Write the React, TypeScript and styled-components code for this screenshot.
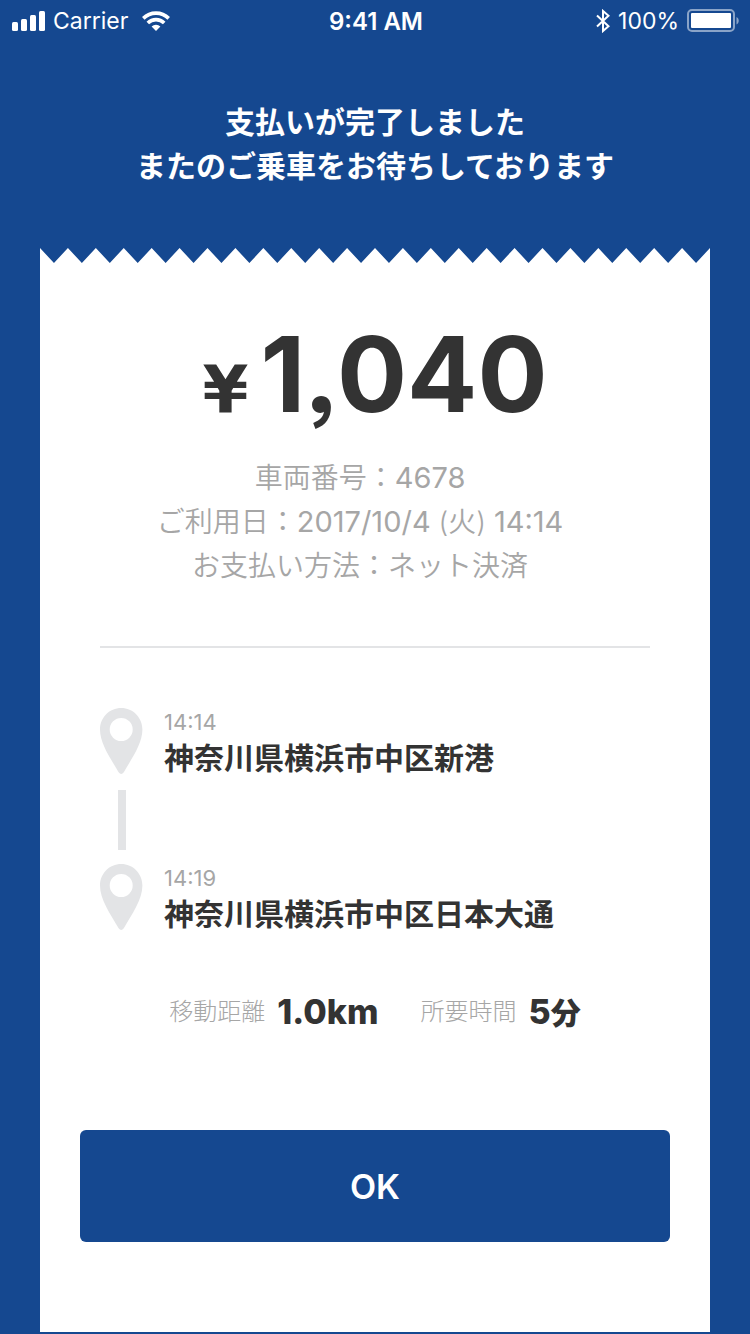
import React from "react";
import styled, { createGlobalStyle } from "styled-components";

const blue = "#154890";

const GlobalStyle = createGlobalStyle`
  * { box-sizing: border-box; }
  body {
    margin: 0;
    background: ${blue};
    color: #333;
    font-family: Inter, "Noto Sans CJK JP", sans-serif;
  }
  h1, p, ol, dl, dd { margin: 0; padding: 0; }
`;

const Screen = styled.div`
  display: flex;
  flex-direction: column;
  min-height: 100vh;
  padding-bottom: 2px;
`;

const StatusBar = styled.header`
  display: grid;
  grid-template-columns: 1fr auto 1fr;
  align-items: center;
  height: 42px;
  padding: 0 10px 0 12px;
  color: #fff;
  font-size: 23px;
`;

const StatusGroup = styled.div<{ $end?: boolean }>`
  display: flex;
  align-items: center;
  justify-content: ${(p) => (p.$end ? "flex-end" : "flex-start")};
  gap: 8px;
`;

const Carrier = styled.span`
  margin-right: 6px;
`;

const Clock = styled.time`
  font-size: 24px;
  font-weight: 600;
`;

const Heading = styled.h1`
  padding: 58px 0 60px;
  color: #fff;
  font-size: 30px;
  font-weight: 700;
  line-height: 44px;
  text-align: center;
`;

const Receipt = styled.main`
  display: flex;
  flex: 1;
  flex-direction: column;
  margin: 0 40px;
`;

const TornEdge = styled.svg`
  display: block;
  width: 100%;
  height: 16px;
`;

const Paper = styled.div`
  flex: 1;
  padding: 54px 40px 88px;
  background: #fff;
`;

const Price = styled.p`
  display: flex;
  align-items: baseline;
  justify-content: center;
  gap: 12px;
  font-size: 104px;
  font-feature-settings: "ss03";
  font-weight: 700;
  line-height: 112px;
`;

const Yen = styled.span`
  font-family: "DejaVu Sans", sans-serif;
  font-size: 66px;
  line-height: 66px;
`;

const Details = styled.dl`
  margin: 26px 30px 0 0;
  color: #a6a6a6;
  font-size: 28px;
  font-weight: 350;
  line-height: 44px;
  text-align: center;
`;

const DetailRow = styled.div`
  height: 44px;

  dt, dd { display: inline; }
`;

const Digits = styled.span`
  font-size: 29px;
  font-weight: 400;
`;

const Route = styled.ol`
  margin: 58px 20px 0;
  padding-top: 60px;
  border-top: 2px solid #e3e4e6;
  list-style: none;
`;

const Stop = styled.li`
  display: flex;
  gap: 20px;
`;

const Marker = styled.div`
  display: flex;
  flex-direction: column;
  align-items: center;
`;

const Pin = styled.svg`
  display: block;
  width: 44px;
  height: 66px;
`;

const Connector = styled.span`
  width: 8px;
  height: 60px;
  margin: 16px 0 14px;
  background: #e3e4e6;
`;

const StopTime = styled.time`
  display: block;
  color: #a6a6a6;
  font-size: 22px;
  line-height: 28px;
`;

const Place = styled.p`
  font-size: 30px;
  font-weight: 700;
  line-height: 44px;
`;

const Summary = styled.dl`
  display: flex;
  justify-content: center;
  gap: 42px;
  margin-top: 54px;
`;

const Stat = styled.div`
  display: flex;
  align-items: center;
  gap: 12px;
  height: 44px;
  line-height: 44px;

  dt { color: #a6a6a6; font-size: 24px; font-weight: 300; }
  dd { font-size: 34px; font-weight: 800; }
  small { font-size: 30px; line-height: 30px; }
`;

const OkButton = styled.button`
  display: block;
  width: 100%;
  height: 112px;
  margin-top: 96px;
  border: 0;
  border-radius: 6px;
  background: ${blue};
  color: #fff;
  font: 600 34px Inter, sans-serif;
`;

const SignalIcon = () => (
  <svg width="33" height="20" viewBox="0 0 33 20" fill="#fff" aria-hidden="true">
    <rect y="11" width="6" height="9" rx="1.5" />
    <rect x="9" y="8" width="6" height="12" rx="1.5" />
    <rect x="18" y="4" width="6" height="16" rx="1.5" />
    <rect x="27" width="6" height="20" rx="1.5" />
  </svg>
);

const WifiIcon = () => (
  <svg width="28" height="20" viewBox="0 0 28 20" fill="none" stroke="#fff" strokeWidth="3.6" aria-hidden="true">
    <path d="M1.3 7.4a18 18 0 0 1 25.4 0" />
    <path d="M5.8 12a11.6 11.6 0 0 1 16.4 0" />
    <path d="M14 20l-4.4-4.4a6.2 6.2 0 0 1 8.8 0z" fill="#fff" stroke="none" />
  </svg>
);

const BluetoothIcon = () => (
  <svg width="14" height="24" viewBox="0 0 14 24" fill="none" stroke="#fff" strokeWidth="2" aria-hidden="true">
    <path d="M1 6.5l11.5 10.7L7 22V2l5.500 4.800L1 17.500" />
  </svg>
);

const BatteryIcon = () => (
  <svg width="53" height="24" viewBox="0 0 53 24" aria-hidden="true">
    <rect x="1" y="1" width="46" height="21" rx="4" fill="none" stroke="#fff" strokeOpacity=".5" strokeWidth="2" />
    <rect x="4" y="4" width="40" height="15" rx="1" fill="#fff" />
    <path d="M49.500 8c3 1.500 3 6 0 7.500z" fill="#fff" fillOpacity=".5" />
  </svg>
);

const PinIcon = () => (
  <Pin viewBox="0 0 44 66" aria-hidden="true">
    <path
      fill="#e3e4e6"
      fillRule="evenodd"
      d="M21.200 0C9.500 0 0 9.400 0 21.500c0 14 10 28 18.600 42.700q2.600 3.400 5.200 0c8.600-14.700 18.600-28.700 18.600-42.700C42.400 9.400 32.900 0 21.200 0zm0 10a11.500 11.500 0 1 1 0 23 11.500 11.500 0 0 1 0-23z"
    />
  </Pin>
);

const TEETH = 24;
const tornPath =
  "M0 0" +
  Array.from({ length: TEETH }, (_, i) => `L${i * 28 + 14} 15L${i * 28 + 28} 0`).join("") +
  `V16H0Z`;

const details = [
  { label: "車両番号", value: <Digits>4678</Digits> },
  {
    label: "ご利用日",
    value: (
      <>
        <Digits>2017/10/4</Digits> (火) <Digits>14:14</Digits>
      </>
    ),
  },
  { label: "お支払い方法", value: "ネット決済" },
];

const stops = [
  { time: "14:14", place: "神奈川県横浜市中区新港" },
  { time: "14:19", place: "神奈川県横浜市中区日本大通" },
];

export default function App() {
  return (
    <Screen lang="ja">
      <GlobalStyle />
      <StatusBar>
        <StatusGroup>
          <SignalIcon />
          <Carrier>Carrier</Carrier>
          <WifiIcon />
        </StatusGroup>
        <Clock>9:41 AM</Clock>
        <StatusGroup $end>
          <BluetoothIcon />
          <span>100%</span>
          <BatteryIcon />
        </StatusGroup>
      </StatusBar>
      <Heading>
        支払いが完了しました
        <br />
        またのご乗車をお待ちしております
      </Heading>
      <Receipt>
        <TornEdge viewBox="0 0 672 16" preserveAspectRatio="none" aria-hidden="true">
          <path d={tornPath} fill="#fff" />
        </TornEdge>
        <Paper>
          <Price>
            <Yen>¥</Yen>
            <span>1,040</span>
          </Price>
          <Details>
            {details.map(({ label, value }) => (
              <DetailRow key={label}>
                <dt>{label}：</dt>
                <dd>{value}</dd>
              </DetailRow>
            ))}
          </Details>
          <Route>
            {stops.map((stop, i) => (
              <Stop key={stop.time}>
                <Marker>
                  <PinIcon />
                  {i < stops.length - 1 && <Connector />}
                </Marker>
                <div>
                  <StopTime>{stop.time}</StopTime>
                  <Place>{stop.place}</Place>
                </div>
              </Stop>
            ))}
          </Route>
          <Summary>
            <Stat>
              <dt>移動距離</dt>
              <dd>1.0km</dd>
            </Stat>
            <Stat>
              <dt>所要時間</dt>
              <dd>
                5<small>分</small>
              </dd>
            </Stat>
          </Summary>
          <OkButton type="button">OK</OkButton>
        </Paper>
      </Receipt>
    </Screen>
  );
}
